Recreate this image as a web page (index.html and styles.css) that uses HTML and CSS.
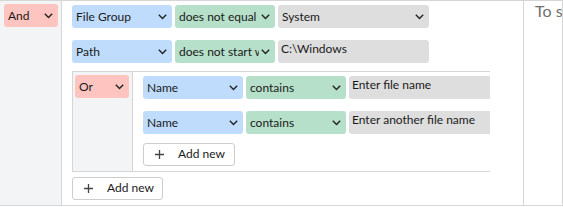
FILE: index.html
```html
<!DOCTYPE html>
<html>
<head>
<meta charset="utf-8">
<link rel="stylesheet" href="styles.css">
</head>
<body>
<div class="rule">
  <div class="op-cell">
    <div class="sel op"><span class="lbl">And</span><svg class="chev" viewBox="0 0 9 6"><polyline points="0.8,0.8 4.5,4.6 8.2,0.8"/></svg></div>
  </div>
  <div class="main-cell">
    <div class="clip">
      <div class="row">
        <div class="sel field"><span class="lbl">File Group</span><svg class="chev" viewBox="0 0 9 6"><polyline points="0.8,0.8 4.5,4.6 8.2,0.8"/></svg></div>
        <div class="sel cond"><span class="lbl">does not equal</span><svg class="chev" viewBox="0 0 9 6"><polyline points="0.8,0.8 4.5,4.6 8.2,0.8"/></svg></div>
        <div class="sel val"><span class="lbl">System</span><svg class="chev" viewBox="0 0 9 6"><polyline points="0.8,0.8 4.5,4.6 8.2,0.8"/></svg></div>
      </div>
      <div class="row row-2">
        <div class="sel field"><span class="lbl">Path</span><svg class="chev" viewBox="0 0 9 6"><polyline points="0.8,0.8 4.5,4.6 8.2,0.8"/></svg></div>
        <div class="sel cond"><span class="lbl">does not start with</span><svg class="chev" viewBox="0 0 9 6"><polyline points="0.8,0.8 4.5,4.6 8.2,0.8"/></svg></div>
        <div class="inp val">C:\Windows</div>
      </div>
      <div class="group">
        <div class="op-cell inner-op">
          <div class="sel op"><span class="lbl">Or</span><svg class="chev" viewBox="0 0 9 6"><polyline points="0.8,0.8 4.5,4.6 8.2,0.8"/></svg></div>
        </div>
        <div class="group-body">
          <div class="row">
            <div class="sel field"><span class="lbl">Name</span><svg class="chev" viewBox="0 0 9 6"><polyline points="0.8,0.8 4.5,4.6 8.2,0.8"/></svg></div>
            <div class="sel cond"><span class="lbl">contains</span><svg class="chev" viewBox="0 0 9 6"><polyline points="0.8,0.8 4.5,4.6 8.2,0.8"/></svg></div>
            <div class="inp val">Enter file name</div>
          </div>
          <div class="row row-2">
            <div class="sel field"><span class="lbl">Name</span><svg class="chev" viewBox="0 0 9 6"><polyline points="0.8,0.8 4.5,4.6 8.2,0.8"/></svg></div>
            <div class="sel cond"><span class="lbl">contains</span><svg class="chev" viewBox="0 0 9 6"><polyline points="0.8,0.8 4.5,4.6 8.2,0.8"/></svg></div>
            <div class="inp val">Enter another file name</div>
          </div>
          <button class="add inner-add"><svg class="plus" viewBox="0 0 9 9"><path d="M4.5 0V9M0 4.5H9"/></svg><span>Add new</span></button>
        </div>
      </div>
      <button class="add outer-add"><svg class="plus" viewBox="0 0 9 9"><path d="M4.5 0V9M0 4.5H9"/></svg><span>Add new</span></button>
    </div>
  </div>
  <div class="note-cell"><span class="note">To specify which files to match</span></div>
</div>
</body>
</html>
```
FILE: styles.css
```css
* { box-sizing: border-box; }
html, body { margin: 0; padding: 0; background: #fff; }
body {
  font-family: Lato, "Noto Sans", sans-serif;
  font-size: 12px;
  color: #1a1a1a;
  width: 563px;
  height: 207px;
  overflow: hidden;
}
.rule {
  display: flex;
  height: 206px;
  border-top: 1px solid #d6d6d6;
  border-bottom: 1px solid #d6d6d6;
}
.op-cell {
  width: 62px;
  flex-shrink: 0;
  background: #f3f4f6;
  border-right: 1px solid #d6d6d6;
  padding: 3px 4px 0 4px;
}
.sel {
  display: flex;
  align-items: center;
  height: 23px;
  border-radius: 3px;
  padding: 0 5px 0 4px;
  line-height: 23px;
  white-space: nowrap;
  flex-shrink: 0;
}
.lbl {
  flex: 1;
  overflow: hidden;
  white-space: nowrap;
}
.chev {
  width: 9px;
  height: 6px;
  margin-left: 2px;
  flex-shrink: 0;
  fill: none;
  stroke: #222;
  stroke-width: 1.4;
}
.op { width: 54px; background: #fec4bf; }
.field { width: 100px; background: #bfdcfd; }
.cond { width: 100px; background: #b6e0ca; }
.val { width: 151px; background: #dedede; }
.inp {
  height: 23px;
  border-radius: 3px;
  padding: 0 3px;
  line-height: 18px;
  white-space: nowrap;
  overflow: hidden;
  flex-shrink: 0;
}
.main-cell {
  width: 462px;
  flex-shrink: 0;
  border-right: 1px solid #d6d6d6;
  padding: 4px 0 0 10px;
}
.clip {
  width: 418px;
  height: 200px;
  overflow: hidden;
}
.row {
  display: flex;
  gap: 3px;
}
.row-2 { margin-top: 12px; }
.group {
  display: flex;
  width: max-content;
  height: 101px;
  margin-top: 8px;
  border: 1px solid #d6d6d6;
}
.inner-op {
  width: 60px;
  padding: 3px 2px 0 2px;
}
.group-body {
  padding: 4px 10px 0 10px;
}
.add {
  display: flex;
  align-items: center;
  height: 23px;
  border: 1px solid #cdcdcd;
  border-radius: 3px;
  background: #fff;
  font-family: inherit;
  font-size: 12px;
  color: #1a1a1a;
  padding: 0 0 2px 11px;
  margin: 0;
}
.inner-add { width: 92px; margin-top: 9px; }
.outer-add { width: 91px; margin-top: 5px; }
.plus {
  width: 9px;
  height: 9px;
  fill: none;
  stroke: #444;
  stroke-width: 1.3;
  margin-right: 14px;
  margin-top: 2px;
}
.note-cell {
  width: 39px;
  flex-shrink: 0;
  border-right: 1px solid #d6d6d6;
  padding-left: 11px;
  overflow: hidden;
}
.note {
  display: block;
  white-space: nowrap;
  font-size: 16px;
  line-height: 20px;
  color: #707070;
}
```
